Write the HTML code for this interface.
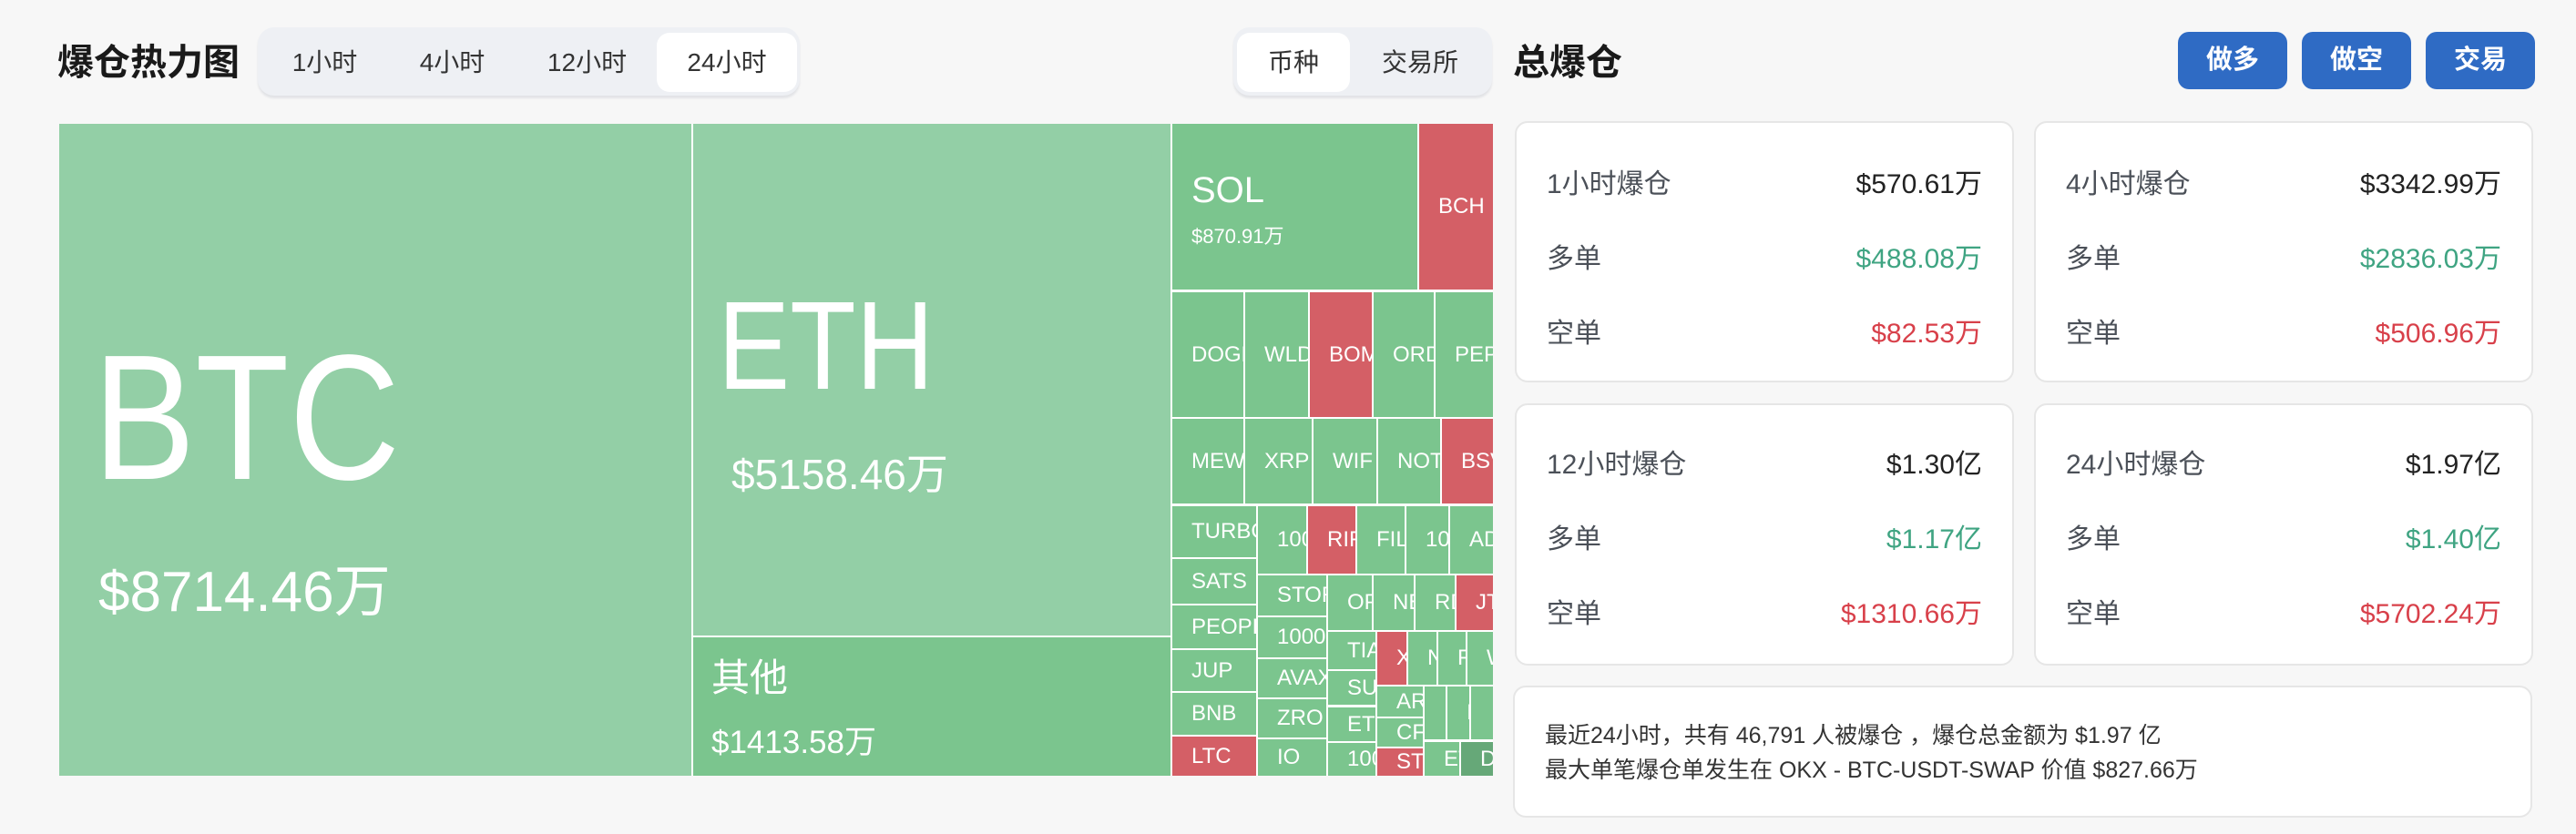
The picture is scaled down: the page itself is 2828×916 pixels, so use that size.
<!DOCTYPE html>
<html><head><meta charset="utf-8"><style>
*{margin:0;padding:0;box-sizing:border-box}
body{width:2828px;height:916px;background:#f7f7f7;font-family:"Liberation Sans","Noto Sans CJK SC",sans-serif;position:relative;overflow:hidden;color:#222}
.a{position:absolute}
.title{font-size:40px;font-weight:bold;color:#1a1a1a;line-height:1;white-space:nowrap}
.seg{background:#eef0f4;border-radius:18px;box-shadow:0 3px 2px #e2e3e6}
.tab{position:absolute;top:6px;height:65px;line-height:65px;text-align:center;font-size:28px;color:#333;border-radius:14px}
.tab.on{background:#fff}
.btn{position:absolute;top:35px;width:120px;height:63px;background:#2f6bc4;border-radius:12px;color:#fff;font-weight:bold;font-size:29px;text-align:center;line-height:63px}
.tm{position:absolute;left:0;top:0}
.c{position:absolute;background:#7bc58e;color:#fff;overflow:hidden;white-space:nowrap;font-size:24px;display:flex;align-items:center;padding-left:21px}
.c.r{background:#d45f66}
.c.l{background:#93cfa6}
.card{position:absolute;background:#fff;border:2px solid #e6e6e6;border-radius:14px}
.row{position:absolute;left:33px;right:33px;height:40px;line-height:40px;font-size:30px}
.row .k{position:absolute;left:0;color:#4b5058}
.row .v{position:absolute;right:0;color:#222}
.g{color:#3fa482!important}.rd{color:#d8404a!important}
</style></head><body>
<div class="a title" style="left:63px;top:49px">爆仓热力图</div>
<div class="a seg" style="left:283px;top:30px;width:595px;height:75px">
<div class="tab" style="left:0;width:147px">1小时</div>
<div class="tab" style="left:140px;width:147px">4小时</div>
<div class="tab" style="left:288px;width:147px">12小时</div>
<div class="tab on" style="left:438px;width:154px">24小时</div>
</div>
<div class="a seg" style="left:1354px;top:30px;width:284px;height:75px">
<div class="tab on" style="left:4px;width:124px">币种</div>
<div class="tab" style="left:140px;width:130px">交易所</div>
</div>
<div class="a title" style="left:1661px;top:49px">总爆仓</div>
<div class="btn" style="left:2391px">做多</div>
<div class="btn" style="left:2527px">做空</div>
<div class="btn" style="left:2663px">交易</div>

<div class="a" style="left:65px;top:136px;width:1574px;height:716px;background:#fff"></div>
<div class="c l" style="left:65px;top:136px;width:694px;height:716px;display:block;padding:0">
<div class="a" style="left:37px;top:225px;font-size:196px;line-height:1;transform:scaleX(0.86);transform-origin:left">BTC</div>
<div class="a" style="left:43px;top:484px;font-size:62px;line-height:1">$8714.46万</div>
</div>
<div class="c l" style="left:761px;top:136px;width:524px;height:562px;display:block;padding:0">
<div class="a" style="left:27px;top:175px;font-size:138px;line-height:1;transform:scaleX(0.86);transform-origin:left">ETH</div>
<div class="a" style="left:42px;top:362px;font-size:46px;line-height:1">$5158.46万</div>
</div>
<div class="c" style="left:761px;top:700px;width:524px;height:152px;display:block;padding:0">
<div class="a" style="left:20px;top:24px;font-size:42px;line-height:1">其他</div>
<div class="a" style="left:20px;top:98px;font-size:35px;line-height:1">$1413.58万</div>
</div>
<div class="c" style="left:1287px;top:136px;width:269px;height:182px;display:block;padding:0">
<div class="a" style="left:21px;top:53px;font-size:40px;line-height:1">SOL</div>
<div class="a" style="left:21px;top:113px;font-size:22px;line-height:1">$870.91万</div>
</div>
<div class="c r" style="left:1558px;top:136px;width:81px;height:182px">BCH</div>
<div class="c" style="left:1287px;top:321px;width:78px;height:137px">DOGE</div>
<div class="c" style="left:1367px;top:321px;width:69px;height:137px">WLD</div>
<div class="c r" style="left:1438px;top:321px;width:68px;height:137px">BOM</div>
<div class="c" style="left:1508px;top:321px;width:66px;height:137px">ORD</div>
<div class="c" style="left:1576px;top:321px;width:63px;height:137px">PEP</div>
<div class="c" style="left:1287px;top:460px;width:78px;height:93px">MEW</div>
<div class="c" style="left:1367px;top:460px;width:73px;height:93px">XRP</div>
<div class="c" style="left:1442px;top:460px;width:69px;height:93px">WIF</div>
<div class="c" style="left:1513px;top:460px;width:68px;height:93px">NOT</div>
<div class="c r" style="left:1583px;top:460px;width:56px;height:93px">BSV</div>
<div class="c" style="left:1287px;top:556px;width:92px;height:56px">TURBO</div>
<div class="c" style="left:1287px;top:614px;width:92px;height:49px">SATS</div>
<div class="c" style="left:1287px;top:665px;width:92px;height:47px">PEOPLE</div>
<div class="c" style="left:1287px;top:714px;width:92px;height:45px">JUP</div>
<div class="c" style="left:1287px;top:761px;width:92px;height:46px">BNB</div>
<div class="c r" style="left:1287px;top:809px;width:92px;height:43px">LTC</div>
<div class="c" style="left:1381px;top:556px;width:53px;height:74px">1000</div>
<div class="c r" style="left:1436px;top:556px;width:52px;height:74px">RIF</div>
<div class="c" style="left:1490px;top:556px;width:52px;height:74px">FIL</div>
<div class="c" style="left:1544px;top:556px;width:46px;height:74px">10</div>
<div class="c" style="left:1592px;top:556px;width:47px;height:74px">ADA</div>
<div class="c" style="left:1381px;top:632px;width:75px;height:44px">STORJ</div>
<div class="c" style="left:1381px;top:678px;width:75px;height:44px">1000S</div>
<div class="c" style="left:1381px;top:724px;width:75px;height:42px">AVAX</div>
<div class="c" style="left:1381px;top:768px;width:75px;height:42px">ZRO</div>
<div class="c" style="left:1381px;top:812px;width:75px;height:40px">IO</div>
<div class="c" style="left:1458px;top:632px;width:48px;height:60px">OP</div>
<div class="c" style="left:1508px;top:632px;width:44px;height:60px">NEO</div>
<div class="c" style="left:1554px;top:632px;width:43px;height:60px">RDN</div>
<div class="c r" style="left:1599px;top:632px;width:40px;height:60px">JTO</div>
<div class="c" style="left:1458px;top:694px;width:52px;height:41px">TIA</div>
<div class="c r" style="left:1512px;top:694px;width:32px;height:58px">X</div>
<div class="c" style="left:1546px;top:694px;width:31px;height:58px">N</div>
<div class="c" style="left:1579px;top:694px;width:30px;height:58px">F</div>
<div class="c" style="left:1611px;top:694px;width:28px;height:58px">W</div>
<div class="c" style="left:1458px;top:737px;width:52px;height:37px">SUI</div>
<div class="c" style="left:1458px;top:777px;width:52px;height:37px">ETC</div>
<div class="c" style="left:1458px;top:816px;width:52px;height:36px">100</div>
<div class="c" style="left:1512px;top:754px;width:50px;height:33px">AR</div>
<div class="c" style="left:1512px;top:789px;width:50px;height:31px">CF</div>
<div class="c r" style="left:1512px;top:822px;width:50px;height:30px">ST</div>
<div class="c" style="left:1564px;top:754px;width:23px;height:58px"></div>
<div class="c" style="left:1589px;top:754px;width:24px;height:58px">I</div>
<div class="c" style="left:1615px;top:754px;width:24px;height:58px"></div>
<div class="c" style="left:1564px;top:815px;width:38px;height:37px">ET</div>
<div class="c" style="left:1604px;top:815px;width:35px;height:37px;background:#66a878">D</div>

<div class="card" style="left:1663px;top:133px;width:548px;height:287px">
<div class="row" style="top:48px"><span class="k">1小时爆仓</span><span class="v">$570.61万</span></div>
<div class="row" style="top:130px"><span class="k">多单</span><span class="v g">$488.08万</span></div>
<div class="row" style="top:212px"><span class="k">空单</span><span class="v rd">$82.53万</span></div>
</div>
<div class="card" style="left:2233px;top:133px;width:548px;height:287px">
<div class="row" style="top:48px"><span class="k">4小时爆仓</span><span class="v">$3342.99万</span></div>
<div class="row" style="top:130px"><span class="k">多单</span><span class="v g">$2836.03万</span></div>
<div class="row" style="top:212px"><span class="k">空单</span><span class="v rd">$506.96万</span></div>
</div>
<div class="card" style="left:1663px;top:443px;width:548px;height:288px">
<div class="row" style="top:46px"><span class="k">12小时爆仓</span><span class="v">$1.30亿</span></div>
<div class="row" style="top:128px"><span class="k">多单</span><span class="v g">$1.17亿</span></div>
<div class="row" style="top:210px"><span class="k">空单</span><span class="v rd">$1310.66万</span></div>
</div>
<div class="card" style="left:2233px;top:443px;width:548px;height:288px">
<div class="row" style="top:46px"><span class="k">24小时爆仓</span><span class="v">$1.97亿</span></div>
<div class="row" style="top:128px"><span class="k">多单</span><span class="v g">$1.40亿</span></div>
<div class="row" style="top:210px"><span class="k">空单</span><span class="v rd">$5702.24万</span></div>
</div>
<div class="card" style="left:1661px;top:753px;width:1119px;height:145px">
<div class="a" style="left:33px;top:34px;font-size:25px;line-height:38px;color:#333;white-space:nowrap">最近24小时，共有 46,791 人被爆仓 ，爆仓总金额为 $1.97 亿<br>最大单笔爆仓单发生在 OKX - BTC-USDT-SWAP 价值 $827.66万</div>
</div>
</body></html>
